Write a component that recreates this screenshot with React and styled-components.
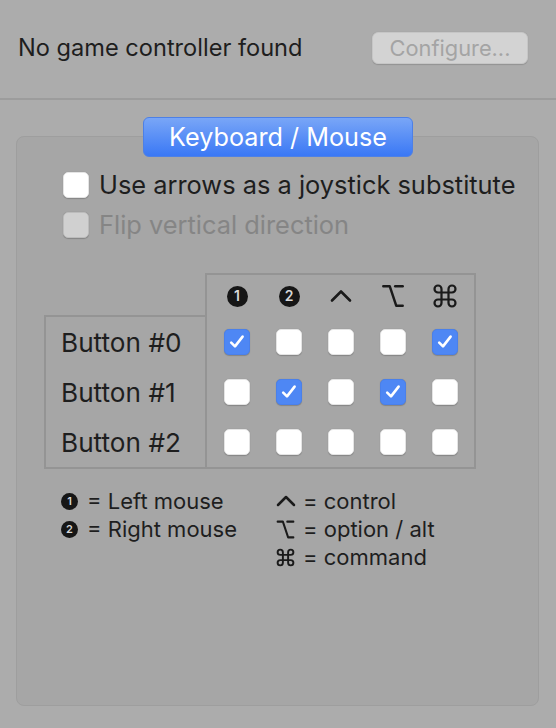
import React from 'react';
import styled, { createGlobalStyle } from 'styled-components';
import { ChevronUp, Option, Command } from 'lucide-react';

const GlobalStyle = createGlobalStyle`
  html, body {
    margin: 0;
    padding: 0;
    background: #acacac;
  }
  body {
    font-family: Inter, "Noto Sans", "DejaVu Sans", sans-serif;
    color: #1f1f1f;
  }
`;

const rows = [
  { label: 'Button #0', checks: [true, false, false, false, true] },
  { label: 'Button #1', checks: [false, true, false, true, false] },
  { label: 'Button #2', checks: [false, false, false, false, false] },
];

const CheckMark = () => (
  <svg width="18" height="18" viewBox="0 0 18 18">
    <path d="M3.2 9.6 L7 13.4 L14.6 3.6" fill="none" stroke="#fff" strokeWidth="2.6" strokeLinecap="round" strokeLinejoin="round" />
  </svg>
);

const ink = '#1a1a1a';

const App = () => {
  return (
    <>
      <GlobalStyle />
      <Window>
        <TopBar>
          <Status>No game controller found</Status>
          <ConfigureButton disabled>Configure...</ConfigureButton>
        </TopBar>

        <Content>
          <Panel>
            <Tab>Keyboard / Mouse</Tab>

            <Options>
              <OptionRow>
                <Box />
                <OptionLabel>Use arrows as a joystick substitute</OptionLabel>
              </OptionRow>
              <OptionRow>
                <Box $disabled />
                <OptionLabel $disabled>Flip vertical direction</OptionLabel>
              </OptionRow>
            </Options>

            <Table>
              <Corner />
              <HeaderCells>
                <HeadCell><Bullet $size={21}>1</Bullet></HeadCell>
                <HeadCell><Bullet $size={21}>2</Bullet></HeadCell>
                <HeadCell><ChevronUp size={36} strokeWidth={1.75} color={ink} /></HeadCell>
                <HeadCell><Option size={26} strokeWidth={2.2} color={ink} /></HeadCell>
                <HeadCell><Command size={28} strokeWidth={1.9} color={ink} /></HeadCell>
              </HeaderCells>
              <Labels>
                {rows.map((r) => (
                  <RowLabel key={r.label}>{r.label}</RowLabel>
                ))}
              </Labels>
              <Cells>
                {rows.map((r) =>
                  r.checks.map((c, i) => (
                    <Cell key={r.label + i}>
                      <Box $checked={c}>{c && <CheckMark />}</Box>
                    </Cell>
                  ))
                )}
              </Cells>
            </Table>

            <Legend>
              <LegendCol>
                <LegendItem><Bullet $size={17}>1</Bullet>= Left mouse</LegendItem>
                <LegendItem><Bullet $size={17}>2</Bullet>= Right mouse</LegendItem>
              </LegendCol>
              <LegendCol>
                <LegendItem><SymbolSlot><ChevronUp size={32} strokeWidth={1.9} color={ink} /></SymbolSlot>= control</LegendItem>
                <LegendItem><SymbolSlot><Option size={21} strokeWidth={2.3} color={ink} /></SymbolSlot>= option / alt</LegendItem>
                <LegendItem><SymbolSlot><Command size={21} strokeWidth={2.2} color={ink} /></SymbolSlot>= command</LegendItem>
              </LegendCol>
            </Legend>
          </Panel>
        </Content>
      </Window>
    </>
  );
};

export default App;

const Window = styled.div`
  width: 556px;
  height: 728px;
  display: flex;
  flex-direction: column;
`;

const TopBar = styled.div`
  height: 100px;
  box-sizing: border-box;
  border-bottom: 2px solid #9c9c9c;
  display: flex;
  align-items: center;
  justify-content: space-between;
  padding: 0 28px 0 18px;
`;

const Status = styled.span`
  font-size: 23.6px;
  color: #1e1e1e;
  margin-top: -4px;
`;

const ConfigureButton = styled.button`
  width: 156px;
  height: 32px;
  margin-top: -2px;
  border: 1px solid #c6c6c6;
  border-radius: 6px;
  background: #d3d3d3;
  color: #a4a4a4;
  font-family: inherit;
  font-size: 21.8px;
  box-shadow: 0 0.5px 1px rgba(0, 0, 0, 0.15);
  padding: 0;
`;

const Content = styled.div`
  flex: 1;
  padding: 36px 17px 22px 16px;
  display: flex;
  flex-direction: column;
`;

const Panel = styled.div`
  flex: 1;
  background: #a6a6a6;
  border: 1px solid #9e9e9e;
  border-radius: 8px;
  display: flex;
  flex-direction: column;
`;

const Tab = styled.div`
  align-self: center;
  margin: -20px 0 0 1px;
  width: 270px;
  height: 40px;
  box-sizing: border-box;
  border-radius: 6px;
  background: linear-gradient(#79a6f7, #3a78f5);
  border: 1px solid #4d80e6;
  color: #fff;
  font-size: 25.2px;
  display: flex;
  align-items: center;
  justify-content: center;
`;

const Options = styled.div`
  display: flex;
  flex-direction: column;
  gap: 13px;
  padding: 14px 0 0 46px;
`;

const OptionRow = styled.label`
  display: flex;
  align-items: center;
  gap: 10px;
  height: 27px;
`;

const OptionLabel = styled.span`
  font-size: 25.4px;
  color: ${(p) => (p.$disabled ? '#858585' : '#1e1e1e')};
`;

const Box = styled.span`
  width: 26px;
  height: 26px;
  box-sizing: border-box;
  border-radius: 5px;
  display: flex;
  align-items: center;
  justify-content: center;
  flex-shrink: 0;
  background: ${(p) => (p.$checked ? '#4e87f4' : p.$disabled ? '#d0d0d0' : '#ffffff')};
  border: 1px solid ${(p) => (p.$checked ? '#4a80ea' : p.$disabled ? '#bcbcbc' : '#e4e4e4')};
  box-shadow: 0 0.5px 1px rgba(0, 0, 0, 0.2);
`;

const Table = styled.div`
  display: grid;
  grid-template-columns: 161px 271px;
  grid-template-rows: 44px 152px;
  margin: 35px 0 0 27px;
`;

const Corner = styled.div`
  border-bottom: 2px solid #949494;
`;

const HeaderCells = styled.div`
  border: 2px solid #949494;
  border-bottom: none;
  display: grid;
  grid-template-columns: repeat(5, 52px);
  padding: 0 4px;
  align-items: center;
`;

const HeadCell = styled.div`
  display: flex;
  justify-content: center;
  align-items: center;
  height: 40px;
`;

const Bullet = styled.span`
  width: ${(p) => p.$size}px;
  height: ${(p) => p.$size}px;
  border-radius: 50%;
  background: #161616;
  color: #d8d8d8;
  font-size: ${(p) => Math.round(p.$size * 0.66)}px;
  font-weight: 600;
  display: inline-flex;
  align-items: center;
  justify-content: center;
  line-height: 1;
  flex-shrink: 0;
`;

const SymbolSlot = styled.span`
  width: 17px;
  height: 21px;
  display: inline-flex;
  justify-content: center;
  align-items: center;
  flex-shrink: 0;

  svg {
    flex-shrink: 0;
  }
`;

const Labels = styled.div`
  border: 2px solid #949494;
  border-top: none;
  border-right: none;
  display: grid;
  grid-template-rows: repeat(3, 50px);
`;

const RowLabel = styled.div`
  display: flex;
  align-items: center;
  padding-left: 15px;
  font-size: 26.2px;
  color: #1e1e1e;
`;

const Cells = styled.div`
  border: 2px solid #949494;
  border-top: none;
  display: grid;
  grid-template-columns: repeat(5, 52px);
  grid-template-rows: repeat(3, 50px);
  padding: 0 4px;
`;

const Cell = styled.div`
  display: flex;
  align-items: center;
  justify-content: center;
`;

const Legend = styled.div`
  display: grid;
  grid-template-columns: 216px auto;
  margin: 18px 0 0 44px;
`;

const LegendCol = styled.div`
  display: flex;
  flex-direction: column;
`;

const LegendItem = styled.div`
  height: 28px;
  display: flex;
  align-items: center;
  gap: 9px;
  font-size: 22px;
  color: #1e1e1e;
`;
